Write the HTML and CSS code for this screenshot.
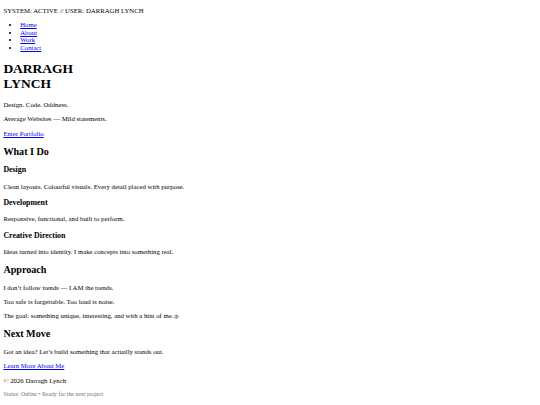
FILE: index.html
```html
<!DOCTYPE html>
<html lang="en">
<head>
<meta charset="utf-8">
<title>Darragh Lynch</title>
<link rel="stylesheet" href="styles.css">
</head>
<body class="page">
<header class="site-header">
  <div class="status-bar">SYSTEM: ACTIVE // USER: DARRAGH LYNCH</div>
  <nav class="site-nav">
    <ul class="nav-list">
      <li><a href="#">Home</a></li>
      <li><a href="#">About</a></li>
      <li><a href="#">Work</a></li>
      <li><a href="#">Contact</a></li>
    </ul>
  </nav>
</header>
<main class="content">
  <section class="hero">
    <h1 class="hero-title">DARRAGH<br>LYNCH</h1>
    <p>Design. Code. Oddness.</p>
    <p>Average Websites — Mild statements.</p>
    <p><a href="#">Enter Portfolio</a></p>
  </section>
  <section class="services">
    <h2>What I Do</h2>
    <h3>Design</h3>
    <p>Clean layouts. Colourful visuals. Every detail placed with purpose.</p>
    <h3>Development</h3>
    <p>Responsive, functional, and built to perform.</p>
    <h3>Creative Direction</h3>
    <p>Ideas turned into identity. I make concepts into something real.</p>
  </section>
  <section class="approach">
    <h2>Approach</h2>
    <p>I don’t follow trends — I AM the trends.</p>
    <p>Too safe is forgettable. Too loud is noise.</p>
    <p>The goal: something unique, interesting, and with a hint of me.:p</p>
  </section>
  <section class="next">
    <h2>Next Move</h2>
    <p>Got an idea? Let’s build something that actually stands out.</p>
    <p><a href="#">Learn More About Me</a></p>
  </section>
</main>
<footer class="site-footer">
  <p>© 2026 Darragh Lynch</p>
  <p class="status-line">Status: Online • Ready for the next project</p>
</footer>
</body>
</html>
```

FILE: styles.css
```css
html {
  background: #ffffff;
}

.page {
  margin: 3.375px;
  font-family: "Liberation Serif", "Times New Roman", serif;
  font-size: 6.75px;
  line-height: 7.59px;
  color: #000000;
}

.site-header {
  padding-top: 3.5px;
}

.page h1 {
  line-height: 15.61px;
}

.page h2 {
  line-height: 11.39px;
}

.page h3 {
  line-height: 9.28px;
}

.nav-list {
  padding-left: 16.875px;
}

.site-footer .status-line {
  font-size: 0.875em;
  line-height: 6.75px;
  color: #777777;
}
```
